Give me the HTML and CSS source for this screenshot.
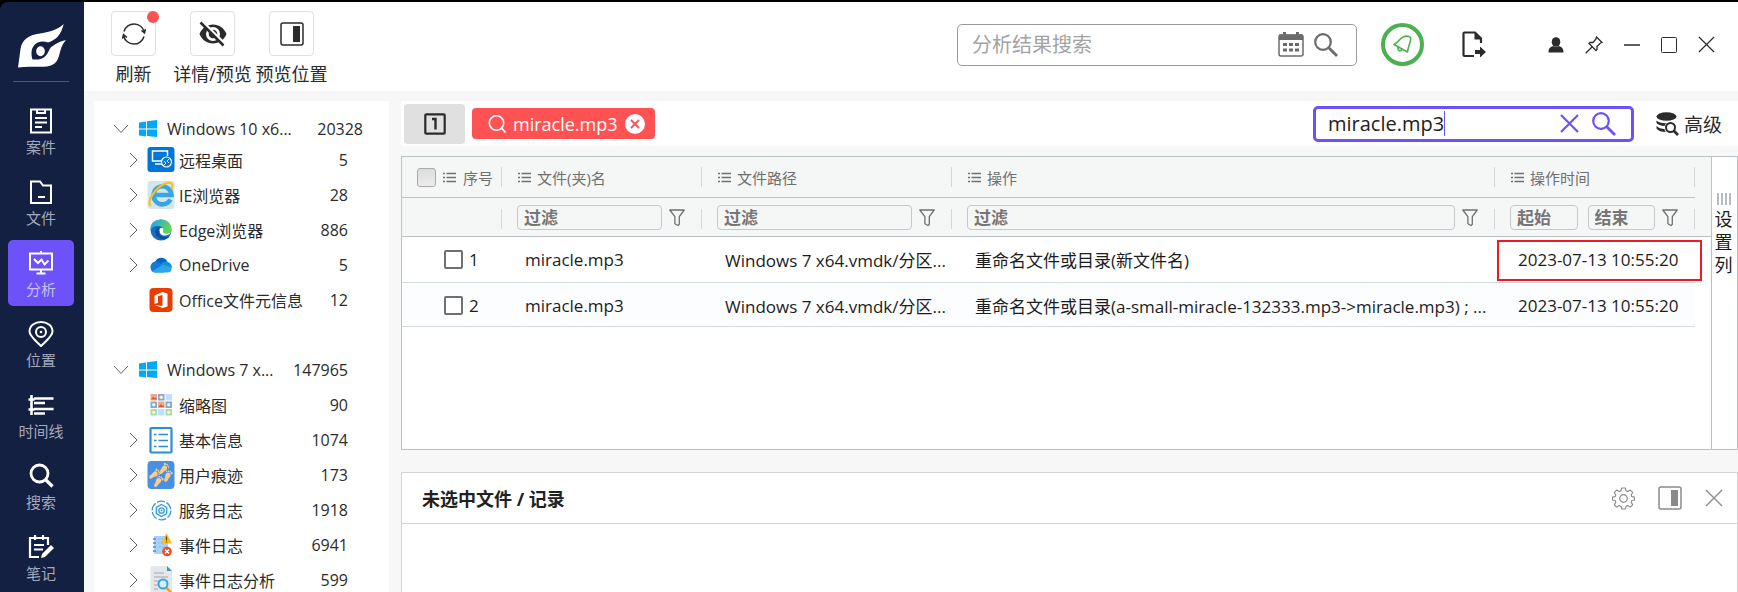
FILE: index.html
```html
<!DOCTYPE html>
<html lang="zh-CN">
<head>
<meta charset="utf-8">
<title>分析</title>
<link rel="stylesheet" href="styles.css">
</head>
<body>
<svg class="defs" aria-hidden="true">
  <symbol id="i-list" viewBox="0 0 13 11"><path d="M0 1.500h2M3.500 1.500H13M0 5.500h2M3.500 5.500H13M0 9.500h2M3.500 9.500H13" stroke="currentColor" stroke-width="1.500"/></symbol>
  <symbol id="i-funnel" viewBox="0 0 16 18"><path d="M.8 1h14.400L10.300 7.600v7.700L9 16.500 5.900 14.800V7.600Z" fill="none" stroke="currentColor" stroke-width="1.300" stroke-linejoin="round"/></symbol>
  <symbol id="i-down" viewBox="0 0 16 10"><path d="M1 1l7 7.500L15 1" fill="none" stroke="currentColor"/></symbol>
  <symbol id="i-right" viewBox="0 0 9 16"><path d="M1 1l7 7-7 7" fill="none" stroke="currentColor"/></symbol>
  <symbol id="i-win" viewBox="0 0 18 18"><path fill="#00a8f8" d="M0 2.500 7 1.500v7H0ZM8 1.300 18 0v8.500H8ZM0 9.500h7v7L0 15.500ZM8 9.500h10V17L8 16Z"/></symbol>
  <symbol id="i-search" viewBox="0 0 24 24"><circle cx="9" cy="9" r="7.800" fill="none" stroke="currentColor" stroke-width="2.200"/><path d="m14.500 14.500 8.500 8.500" stroke="currentColor" stroke-width="2.800"/></symbol>
  <symbol id="i-close" viewBox="0 0 18 18"><path d="m1 1 16 16M17 1 1 17" stroke="currentColor" stroke-width="1.300"/></symbol>
  <symbol id="i-panel" viewBox="0 0 24 24"><rect x="1" y="1" width="22" height="22" rx="2" fill="none" stroke="currentColor" stroke-width="1.500"/><path d="M13 4h7v16h-7z" fill="currentColor"/></symbol>
</svg>
<div class="app">
  <nav class="rail">
    <svg class="logo" viewBox="0 0 48 44" aria-label="Logo"><path fill="#fff" d="M45.700 0C40 6 30 8 22 9.500 10 11 4 16 2.500 25L0 43.500C10 42 20 43.500 29 42.500 38 41 40 36 41.500 30 43 25 44 20 48 16.300 42 17 38 20 34 22.500 31 24.500 31 28 28 31.500 25 35 20 36 14.500 35.500 13 31 13 25 16 21.500 19 17.500 25 16.500 30 18.500 38 16 43 11 45.700 0Z"/><ellipse cx="22.500" cy="27.300" rx="4.300" ry="5" fill="#fff"/></svg>
    <a class="rail-item" href="#case"><svg class="rail-icon" viewBox="0 0 26 26"><g fill="none" stroke="currentColor" stroke-width="2"><path d="M3 1.500h20v23H3z"/><path d="M9 1v4h8V1M7 10h12M7 14.500h12M7 19h7"/></g></svg>案件</a>
    <a class="rail-item" href="#files"><svg class="rail-icon" viewBox="0 0 26 26"><path d="M3 24V2.500h9l3 4h8V24ZM10 18h7" fill="none" stroke="currentColor" stroke-width="2"/></svg>文件</a>
    <a class="rail-item rail-item-active" href="#analysis" aria-current="page"><svg class="rail-icon" viewBox="0 0 26 26"><g fill="none" stroke="currentColor" stroke-width="2"><path d="M2 3.500h22v16H2zM13 1v2M13 19v4M8.500 23.500h9"/><path d="m6 9 4 4 3.500-3.500 3 5 4-4"/></g></svg>分析</a>
    <a class="rail-item" href="#location"><svg class="rail-icon" viewBox="0 0 26 26"><g fill="none" stroke="currentColor" stroke-width="2"><path d="M13 25C7 19 1.500 15 1.500 10.500 1.500 4.500 7 1 13 1s11.500 3.500 11.500 9.500C24.500 15 19 19 13 25Z"/><circle cx="13" cy="11" r="5"/></g><circle cx="13" cy="11" r="1.300" fill="currentColor"/></svg>位置</a>
    <a class="rail-item" href="#timeline"><svg class="rail-icon" viewBox="0 0 26 26"><path d="M3.500 3v20M.5 7.500h6M.5 17.500h6M6 6.500h19.500M6 11h11M6 17h19.500M6 21.500h11" fill="none" stroke="currentColor" stroke-width="2.600"/></svg>时间线</a>
    <a class="rail-item" href="#search"><svg class="rail-icon" viewBox="0 0 26 26"><circle cx="11.500" cy="10.500" r="8.500" fill="none" stroke="currentColor" stroke-width="2.800"/><path d="m17.500 16.500 7 7" stroke="currentColor" stroke-width="3.200"/></svg>搜索</a>
    <a class="rail-item" href="#notes"><svg class="rail-icon" viewBox="0 0 26 26"><g fill="none" stroke="currentColor" stroke-width="2.200"><path d="M20 11V4H2v19h9M7 1v5M15 1v5M6 11h10M6 15.500h9"/></g><path d="m13 24 1-4 9-9 3 3-9 9Z" fill="currentColor"/></svg>笔记</a>
  </nav>

  <header class="topbar">
    <div class="tool-group">
      <button class="tool" type="button"><span class="tool-box"><svg width="24" height="24" viewBox="0 0 24 24"><path d="M2 9.500A10.500 10.500 0 0 1 22.300 10M22 14.500A10.500 10.500 0 0 1 1.700 14M19.500 8.500l3 2.500 1-4M.5 16.500l1-4 3.500 3" fill="none" stroke="currentColor" stroke-width="1.500"/></svg><i class="dot"></i></span>刷新</button>
      <button class="tool" type="button"><span class="tool-box"><svg width="28" height="26" viewBox="0 0 28 26"><path fill="currentColor" fill-rule="evenodd" d="M.5 13C3 7 8 3.500 14 3.500S25 7 27.500 13C25 19 20 22.500 14 22.500S3 19 .5 13Zm6.500 0a7 7 0 1 0 14 0 7 7 0 0 0-14 0Z"/><circle cx="14" cy="13" r="4.300" fill="currentColor"/><path d="M3 0l23 23" stroke="#fff" stroke-width="2.500"/><path d="m1.500 1.500 23 23" stroke="currentColor" stroke-width="2.500"/></svg></span>详情/预览</button>
      <button class="tool" type="button"><span class="tool-box"><svg width="24" height="24"><use href="#i-panel"/></svg></span>预览位置</button>
    </div>
    <div class="top-actions">
      <div class="top-search">
        <input type="text" placeholder="分析结果搜索" aria-label="分析结果搜索">
        <button class="plain" type="button" aria-label="日期"><svg width="26" height="25" viewBox="0 0 26 25"><rect x="1" y="3" width="24" height="21" rx="2" fill="none" stroke="currentColor" stroke-width="1.500"/><path d="M1 2.500h24V8H1zM5 0h3v3H5zM18 0h3v3h-3z" fill="currentColor"/><path d="M5 12.500h16M5 18h16" stroke="currentColor" stroke-width="3" stroke-dasharray="4 2"/></svg></button>
        <button class="plain" type="button" aria-label="搜索"><svg width="24" height="24"><use href="#i-search"/></svg></button>
      </div>
      <button class="plain bell" type="button" aria-label="通知"><svg width="20" height="20" viewBox="0 0 20 20"><path d="M1 9.500C5 8 7 3 10 2q5-2 7.500.5c1 4-2 7-3 14.500L1 9.500Zm4 3c-.5 3 2 4 4 2.300" fill="none" stroke="currentColor" stroke-width="1.600" stroke-linejoin="round"/></svg></button>
      <button class="plain export" type="button" aria-label="导出"><svg width="24" height="27" viewBox="0 0 24 27"><path d="M12 25H2.500Q1.500 25 1.500 24V2.500q0-1 1-1H13l6 6V12" fill="none" stroke="currentColor" stroke-width="2.200"/><path d="M12.500 1v7.500H20ZM13 19h5v-3.500l6 5.500-6 5.500V23h-5Z" fill="currentColor"/></svg></button>
      <div class="win-actions">
        <button class="plain" type="button" aria-label="用户"><svg width="16" height="16" viewBox="0 0 16 16"><ellipse cx="8" cy="5" rx="4.300" ry="4.800" fill="currentColor"/><path d="M.5 15.500c0-4 1.500-5.500 4.500-6.500q3 2 6 0c3 1 4.500 2.500 4.500 6.500Z" fill="currentColor"/></svg></button>
        <button class="plain" type="button" aria-label="置顶"><svg width="18" height="18" viewBox="0 0 18 18"><path d="m11.500 1 5.500 5.500-1.500.5-3.500 3.500v3l-1 1-7-7 1-1h3L11 3ZM7 11 .7 17.300" fill="none" stroke="currentColor" stroke-width="1.300"/></svg></button>
        <button class="plain" type="button" aria-label="最小化"><svg width="16" height="16" viewBox="0 0 16 16"><path d="M0 8h16" stroke="currentColor" stroke-width="1.500"/></svg></button>
        <button class="plain" type="button" aria-label="最大化"><svg width="16" height="16" viewBox="0 0 16 16"><rect x=".5" y=".5" width="15" height="15" rx="1" fill="none" stroke="currentColor"/></svg></button>
        <button class="plain" type="button" aria-label="关闭"><svg width="17" height="17"><use href="#i-close"/></svg></button>
      </div>
    </div>
  </header>

  <aside class="tree">
    <ul class="tree-group tree-group-first">
      <li class="root"><svg class="chev-down"><use href="#i-down"/></svg><svg class="win"><use href="#i-win"/></svg><span class="name">Windows 10 x6...</span><span class="count">20328</span></li>
      <li><svg class="chev"><use href="#i-right"/></svg><svg class="ico" viewBox="0 0 28 28"><rect x=".5" y="1" width="27" height="25" rx="3" fill="#0076d7"/><path d="M15 15H5.500V5h15v5M8 18h7" fill="none" stroke="#fff" stroke-width="1.500"/><circle cx="19.500" cy="16" r="5" fill="none" stroke="#fff" stroke-width="1.200"/><path d="m17 15 2 2-2 2M22 13l-2 2 2 2" fill="none" stroke="#fff"/></svg><span class="name">远程桌面</span><span class="count">5</span></li>
      <li><svg class="chev"><use href="#i-right"/></svg><svg class="ico" viewBox="0 0 28 28"><rect x=".5" width="27" height="28" rx="3" fill="#d3e6ea"/><path d="M23.500 18.500A9 9 0 1 1 24.500 14H8" fill="none" stroke="#39a5e4" stroke-width="4.500"/><path d="M4 25C-1 21 8 7 18 2.500 24 0 27 3 24.500 8" fill="none" stroke="#f5c02c" stroke-width="2.200"/></svg><span class="name">IE浏览器</span><span class="count">28</span></li>
      <li><svg class="chev"><use href="#i-right"/></svg><svg class="ico" viewBox="0 0 28 28"><defs><linearGradient id="eg" x1="0" y1="0" x2="1" y2=".3"><stop offset=".2" stop-color="#2baade"/><stop offset="1" stop-color="#63d64b"/></linearGradient></defs><circle cx="14" cy="14" r="10.500" fill="#146fc4"/><path d="M3.500 14C3 7 8 3.500 14 3.500S24.500 8 24.500 13c0 4-4 5.500-8 4.500-2-1 .5-2 0-4C15.500 9 7 8 3.500 14Z" fill="url(#eg)"/><path d="M12 13c-1.500 4 1 8 6 8 2 0 4-.5 5-1.500-2 5-11 5-14-1C7.500 15 9 12 12 11Z" fill="#0c4f94"/><path d="M12.500 14c0-3 4-2.500 4-.5 0 1.500-1 2 0 3.500 2 1 5 1 7.500-1-1 4-9 5-11 1Z" fill="#fff"/></svg><span class="name">Edge浏览器</span><span class="count">886</span></li>
      <li><svg class="chev"><use href="#i-right"/></svg><svg class="ico" viewBox="0 0 28 28"><path d="M8 11C10 6 18 5 20.500 11l-7 6Z" fill="#0766bd"/><path d="M3.500 17C3 12 8 9 12 11.500L21 18l-4 3.500H8Q4 21 3.500 17Z" fill="#127bd4"/><path d="M13 14c3-4 7-4 8-3 3 1 4 3.500 4 6Z" fill="#1490df"/><path d="M5 20.500 16 13.500l8.500 3q.5 5-4 5H8Q6 21.500 5 20.500Z" fill="#28a8ea"/></svg><span class="name">OneDrive</span><span class="count">5</span></li>
      <li><svg class="chev"></svg><svg class="ico" viewBox="0 0 28 28"><rect x="2.500" y="2" width="23" height="24" rx="4" fill="#eb3c00"/><path d="M7.500 18V9.500L15.500 6l5 1.500v13l-5 1.500-8-3 8 1V9l-4.500 1.300v6.500Z" fill="#fff"/></svg><span class="name">Office文件元信息</span><span class="count">12</span></li>
    </ul>
    <ul class="tree-group">
      <li class="root"><svg class="chev-down"><use href="#i-down"/></svg><svg class="win"><use href="#i-win"/></svg><span class="name">Windows 7 x...</span><span class="count">147965</span></li>
      <li><svg class="chev"></svg><svg class="ico" viewBox="0 0 28 28"><g><path d="M3.500 3h6.500v6.500H3.500zM11 10.500h6.500V17H11z" fill="#f0aa83"/><path d="M11 3h6.500v6.500H11zM3.500 10.500H10V17H3.500zM18.500 10.500H25V17h-6.500z" fill="#7fa9dc"/><path d="M18.500 3H25v6.500h-6.500zM11 18h6.500v6.500H11z" fill="#bfe0fa"/><path d="M3.500 18H10v6.500H3.500zM18.500 18H25v6.500h-6.500z" fill="#a8d9b4"/><path d="m4 8.500 2.500-3 1.500 2 1-1 1 2ZM11.500 16l2.500-3 1.500 2 1-1 1 2Z" fill="#c9603e"/></g><g fill="#fff2b3"><circle cx="14.300" cy="6.200" r="1.700"/><circle cx="6.700" cy="13.700" r="1.700"/><circle cx="21.700" cy="13.700" r="1.700"/><circle cx="6.700" cy="21.200" r="1.700"/><circle cx="21.700" cy="21.200" r="1.700"/></g></svg><span class="name">缩略图</span><span class="count">90</span></li>
      <li><svg class="chev"><use href="#i-right"/></svg><svg class="ico" viewBox="0 0 28 28"><rect x="3.500" y="2" width="21" height="24.500" rx="1" fill="#fff" stroke="#2b8cda" stroke-width="2.200"/><path d="M7 8.500h2.500M11.500 8.500H21M7 14.500h2.500M11.500 14.500H21M7 20.500h2.500M11.500 20.500H21" stroke="#2b8cda" stroke-width="1.500"/></svg><span class="name">基本信息</span><span class="count">1074</span></li>
      <li><svg class="chev"><use href="#i-right"/></svg><svg class="ico" viewBox="0 0 28 28"><defs><g id="foot"><path d="M-2.500-2C-2-4.500 2.300-4.300 2.700-1.500 3 .5 1.500 1 1.300 3c0 2.500-.8 3.500-2 3.500S-2.700 5-2.300 3C-2 1-3 0-2.500-2Z"/><circle cx="-2.300" cy="-4.800" r="1.200"/><circle cx="-.1" cy="-5.500" r=".9"/><circle cx="1.700" cy="-5" r=".8"/><circle cx="3.100" cy="-3.800" r=".7"/></g></defs><rect x=".5" width="27" height="28" rx="4" fill="#4a90e2"/><g fill="#fbcb8b"><use href="#foot" transform="translate(17 8) rotate(35) scale(.95)"/><use href="#foot" transform="translate(7.500 13.500) rotate(48) scale(.95)"/><use href="#foot" transform="translate(20.500 15) rotate(30) scale(-.95 .95)"/><use href="#foot" transform="translate(11 20.500) rotate(38) scale(-.95 .95)"/></g></svg><span class="name">用户痕迹</span><span class="count">173</span></li>
      <li><svg class="chev"><use href="#i-right"/></svg><svg class="ico" viewBox="0 0 28 28"><g fill="none" stroke="#2f9ade" stroke-width="1.300"><circle cx="14.500" cy="14.500" r="9.300" stroke-dasharray="8 1.740"/><path d="m14.500 8.500 5.200 3v6l-5.200 3-5.200-3v-6Z"/><circle cx="14.500" cy="14.500" r="2.700"/></g><circle cx="14.500" cy="14.500" r=".9" fill="#2f9ade"/></svg><span class="name">服务日志</span><span class="count">1918</span></li>
      <li><svg class="chev"><use href="#i-right"/></svg><svg class="ico" viewBox="0 0 28 28"><path d="M7 5h14v18H7z" fill="#a9d0f7"/><path d="M6 8h3M6 12h3M6 16h3M6 20h3" stroke="#4d8fd5" stroke-width="1.500"/><path d="M11 8h9M11 12h9M11 16h9" stroke="#8fc0f0"/><path d="m19.500 2 5.500 10.500H14Z" fill="#fdbe14"/><path d="M19.500 5.500v4M19.500 10.500v1" stroke="#4b3a10" stroke-width="1.200"/><circle cx="20" cy="20.500" r="4.800" fill="#f04c22"/><path d="m18 18.500 4 4M22 18.500l-4 4" stroke="#fff" stroke-width="1.500"/></svg><span class="name">事件日志</span><span class="count">6941</span></li>
      <li><svg class="chev"><use href="#i-right"/></svg><svg class="ico" viewBox="0 0 28 28"><path d="M3.500 0H20l5 5v23H3.500Z" fill="#e4e7ea"/><path d="M20 0v5h5Z" fill="#3b97c6"/><path d="M7 7h10M7 11h14M7 15h14M7 19h4M7 23h4" stroke="#a3a9ae" stroke-width="1.200"/><circle cx="16" cy="18" r="4.500" fill="#d7f0fc" stroke="#3ba3dd" stroke-width="2"/><path d="m19.500 22 5 5" stroke="#f59e23" stroke-width="2.500"/></svg><span class="name">事件日志分析</span><span class="count">599</span></li>
    </ul>
  </aside>

  <main class="main">
    <div class="filterbar">
      <button class="page-btn" type="button" aria-label="第一页"><svg width="22" height="22" viewBox="0 0 22 22"><rect x="1.300" y="1.300" width="19.400" height="19.400" rx="1" fill="none" stroke="currentColor" stroke-width="2.200"/><path d="M8 6h3.500v10.500" fill="none" stroke="currentColor" stroke-width="2.400"/></svg></button>
      <span class="tag"><svg width="18" height="18" viewBox="0 0 18 18"><circle cx="8.500" cy="8" r="7.200" fill="none" stroke="currentColor" stroke-width="1.600"/><path d="m13.500 13 4 4.500" stroke="currentColor" stroke-width="1.600"/></svg>miracle.mp3<button class="plain" type="button" aria-label="移除"><svg width="20" height="20" viewBox="0 0 20 20"><circle cx="10" cy="10" r="10" fill="#fff"/><path d="m6 6 8 8M14 6l-8 8" stroke="#ff5252" stroke-width="1.800"/></svg></button></span>
      <div class="query">
        <input type="text" value="miracle.mp3" aria-label="搜索"><i class="caret"></i>
        <button class="plain clear" type="button" aria-label="清除"><svg width="19" height="19" viewBox="0 0 19 19"><path d="m1 1 17 17M18 1 1 18" stroke="currentColor" stroke-width="2.200"/></svg></button>
        <button class="plain" type="button" aria-label="搜索"><svg width="24" height="24"><use href="#i-search"/></svg></button>
      </div>
      <button class="plain advanced" type="button"><svg width="23" height="24" viewBox="0 0 23 24"><g fill="currentColor"><ellipse cx="10.500" cy="4.500" rx="10" ry="4.300"/><path d="M.5 8.500C3 11 8 11.500 11 11q-2 1-2.500 3Q3 13.500.5 11ZM.5 14q3 3 8 3 0 2 1.500 3-7 0-9.500-3.500Z"/></g><circle cx="14.500" cy="15.500" r="4.500" fill="#fff" stroke="currentColor" stroke-width="2"/><path d="m17.500 18.500 4.500 4.500" stroke="currentColor" stroke-width="2.600"/></svg>高级</button>
    </div>

    <section class="results">
      <div class="grid">
        <table>
          <colgroup><col class="c-index"><col class="c-name"><col class="c-path"><col><col class="c-time"><col class="c-gutter"></colgroup>
          <thead>
            <tr class="titles">
              <th><div class="title title-first"><input class="check check-all" type="checkbox" aria-label="全选"><svg><use href="#i-list"/></svg>序号</div></th>
              <th><div class="title"><svg><use href="#i-list"/></svg>文件(夹)名</div></th>
              <th><div class="title"><svg><use href="#i-list"/></svg>文件路径</div></th>
              <th><div class="title"><svg><use href="#i-list"/></svg>操作</div></th>
              <th><div class="title"><svg><use href="#i-list"/></svg>操作时间</div></th>
              <td class="gutter"></td>
            </tr>
            <tr class="filters">
              <td><div class="filter"></div></td>
              <td><div class="filter"><input type="text" placeholder="过滤" aria-label="文件名过滤"><button class="plain" type="button" aria-label="筛选"><svg><use href="#i-funnel"/></svg></button></div></td>
              <td><div class="filter"><input type="text" placeholder="过滤" aria-label="路径过滤"><button class="plain" type="button" aria-label="筛选"><svg><use href="#i-funnel"/></svg></button></div></td>
              <td><div class="filter"><input type="text" placeholder="过滤" aria-label="操作过滤"><button class="plain" type="button" aria-label="筛选"><svg><use href="#i-funnel"/></svg></button></div></td>
              <td><div class="filter"><input class="from" type="text" placeholder="起始" aria-label="起始时间"><input type="text" placeholder="结束" aria-label="结束时间"><button class="plain" type="button" aria-label="筛选"><svg><use href="#i-funnel"/></svg></button></div></td>
              <td class="gutter"></td>
            </tr>
          </thead>
          <tbody>
            <tr><td><label class="pick"><input class="check" type="checkbox">1</label></td><td>miracle.mp3</td><td>Windows 7 x64.vmdk/分区...</td><td>重命名文件或目录(新文件名)</td><td class="marked">2023-07-13 10:55:20<i class="marker"></i></td><td class="gutter"></td></tr>
            <tr><td><label class="pick"><input class="check" type="checkbox">2</label></td><td>miracle.mp3</td><td>Windows 7 x64.vmdk/分区...</td><td>重命名文件或目录(a-small-miracle-132333.mp3-&gt;miracle.mp3) ; ...</td><td>2023-07-13 10:55:20</td><td class="gutter"></td></tr>
          </tbody>
        </table>
      </div>
      <button class="columns-btn" type="button"><svg width="14" height="12" viewBox="0 0 14 12"><path d="M1 0v12M5 0v12M9 0v12M13 0v12" stroke="#8d989e" stroke-width="1.300"/></svg><span>设置列</span></button>
    </section>

    <section class="detail">
      <header class="detail-head">
        <h2>未选中文件 / 记录</h2>
        <button class="plain" type="button" aria-label="设置"><svg width="23" height="23" viewBox="-12 -12 24 24"><g fill="none" stroke="currentColor" stroke-width="1.200"><circle r="4"/><path stroke-linejoin="round" d="M-1.800-11h3.600l.8 3 1.800.8 2.700-1.600 2.500 2.500L8-3.600l.7 1.600 2.800.5v3l-2.800.6L8 3.800l1.600 2.700-2.500 2.500-2.700-1.600-1.800.8-.8 2.800h-3.600l-.8-2.800-1.800-.8-2.700 1.600-2.500-2.500L-8 3.800l-.7-1.700-2.800-.6v-3l2.800-.5.7-1.600-1.600-2.700 2.500-2.500 2.700 1.600 1.800-.8Z"/></g></svg></button>
        <button class="plain" type="button" aria-label="预览位置"><svg width="24" height="24"><use href="#i-panel"/></svg></button>
        <button class="plain" type="button" aria-label="关闭"><svg width="18" height="18"><use href="#i-close"/></svg></button>
      </header>
    </section>
  </main>
</div>
</body>
</html>
```

FILE: styles.css
```css
* { box-sizing: border-box; }

body {
  margin: 0;
  background: #000;
  color: #2b2b2b;
  font-family: "Open Sans", "Noto Sans CJK SC", sans-serif;
  font-size: 16px;
}

button, input { font: inherit; color: inherit; }
svg { display: block; flex: none; }
.defs { position: absolute; width: 0; height: 0; }

.app {
  display: grid;
  grid-template-columns: 84px 295px minmax(0, 1fr);
  grid-template-rows: 89px minmax(0, 1fr);
  height: 100vh;
  border-top: 2px solid #000;
  background: linear-gradient(#000, #000) 0 0 / 84px 10px no-repeat #f7f7f7;
  overflow: hidden;
}

.plain {
  display: flex;
  align-items: center;
  padding: 0;
  border: 0;
  background: none;
  cursor: pointer;
}

/* Navigation rail */
.rail {
  grid-row: 1 / 3;
  display: flex;
  flex-direction: column;
  align-items: center;
  gap: 5px;
  padding-right: 2px;
  background: #132042;
  border-top-left-radius: 8px;
}
.logo {
  width: 48px;
  height: 44px;
  margin: 22px 0 0 2px;
}
.logo + .rail-item { position: relative; margin-top: 25px; }
.logo + .rail-item::before {
  content: "";
  position: absolute;
  top: -17px;
  left: 5px;
  right: 5px;
  border-top: 1px solid #46558a;
}
.rail-item {
  display: flex;
  flex: none;
  flex-direction: column;
  align-items: center;
  gap: 3px;
  width: 66px;
  height: 66px;
  padding-top: 10px;
  border-radius: 5px;
  color: #a3aabc;
  font-size: 15px;
  line-height: 20px;
  text-decoration: none;
}
.rail-icon { width: 26px; height: 26px; color: #fff; }
.rail-item-active { background: #6c52f8; color: #c9bffc; }

/* Top bar */
.topbar {
  grid-column: 2 / 4;
  display: flex;
  justify-content: space-between;
  padding: 9px 23px 0 10px;
  background: #fff;
}
.tool-group { display: flex; }
.tool {
  display: flex;
  flex-direction: column;
  align-items: center;
  gap: 5px;
  width: 79px;
  padding: 0;
  border: 0;
  background: none;
  font-size: 18px;
  line-height: 26px;
  white-space: nowrap;
}
.tool-box {
  position: relative;
  display: flex;
  align-items: center;
  justify-content: center;
  width: 45px;
  height: 45px;
  border: 1px solid #e0e0e0;
  border-radius: 4px;
}
.dot {
  position: absolute;
  top: -1px;
  right: -4px;
  width: 12px;
  height: 12px;
  border-radius: 50%;
  background: #ff5252;
}
.top-actions {
  display: flex;
  align-items: center;
  height: 43px;
  margin-top: 12px;
}
.top-search {
  display: flex;
  align-items: center;
  gap: 10px;
  width: 400px;
  height: 42px;
  padding: 0 18px 0 14px;
  border: 1px solid #9b9b9b;
  border-radius: 5px;
  color: #6b6b6b;
}
.top-search input {
  flex: 1;
  min-width: 0;
  padding: 0;
  border: 0;
  outline: 0;
  background: none;
  font-size: 20px;
}
.top-search input::placeholder { color: #a3a3a3; }
.bell {
  justify-content: center;
  width: 43px;
  height: 43px;
  margin-left: 24px;
  border: 4px solid #4caf50;
  border-radius: 50%;
  color: #4caf50;
}
.export { margin-left: 38px; }
.win-actions {
  display: flex;
  gap: 21px;
  margin-left: 62px;
}

/* Source tree */
.tree {
  margin: 10px 0 0 10px;
  width: 295px;
  padding-top: 15px;
  background: #fff;
  overflow: hidden;
}
.tree-group { margin: 0; padding: 0; list-style: none; }
.tree-group + .tree-group { margin-top: 35px; }
.tree li {
  display: flex;
  align-items: center;
  height: 35px;
  padding: 0 41px 0 35px;
  white-space: nowrap;
}
.tree .root { padding-left: 19px; }
.tree-group-first .root { height: 26px; padding-right: 26px; }
.chev-down { width: 16px; height: 10px; margin-right: 10px; color: #616161; }
.win { width: 18px; height: 18px; margin-right: 10px; }
.chev { width: 9px; height: 16px; margin-right: 9px; color: #616161; }
.ico { width: 28px; height: 28px; margin-right: 4px; }
.name { flex: 1; }

/* Main column */
.main {
  display: flex;
  flex-direction: column;
  min-width: 0;
  margin: 10px 0 0 22px;
}
.filterbar {
  display: flex;
  flex: none;
  align-items: center;
  height: 45px;
  padding: 0 16px 0 3px;
  background: #fff;
}
.page-btn {
  display: flex;
  align-items: center;
  justify-content: center;
  width: 61px;
  height: 40px;
  padding: 0;
  border: 0;
  border-radius: 4px;
  background: #e0e0e0;
}
.tag {
  display: flex;
  align-items: center;
  gap: 7px;
  height: 31px;
  margin-left: 7px;
  padding: 0 10px 0 16px;
  border-radius: 4px;
  background: #ff5252;
  color: #fff;
  font-size: 18px;
}
.query {
  display: flex;
  align-items: center;
  width: 321px;
  height: 36px;
  margin-left: auto;
  padding: 0 15px 0 12px;
  border: 3px solid #6c52f8;
  border-radius: 5px;
  color: #6c52f8;
}
.query input {
  field-sizing: content;
  padding: 0;
  border: 0;
  outline: 0;
  background: none;
  color: #212121;
  font-size: 20px;
}
.caret { width: 1px; height: 25px; background: #6c52f8; }
.clear { margin: 0 13px 0 auto; }
.advanced {
  gap: 5px;
  margin-left: 22px;
  font-size: 19px;
}

/* Results table */
.results {
  display: flex;
  flex: none;
  height: 294px;
  margin-top: 10px;
  border: 1px solid #bcc1c6;
  background: #fff;
}
.grid { flex: 1; min-width: 0; }
.grid table {
  width: 100%;
  table-layout: fixed;
  border-collapse: separate;
  border-spacing: 0;
  color: #1c1c1c;
  font-size: 17px;
}
.c-index { width: 100px; }
.c-name, .c-time { width: 200px; }
.c-path { width: 250px; }
.c-gutter { width: 16px; }
thead th, thead td {
  padding: 0;
  border-bottom: 1px solid #bcc1c6;
  background: #f5f7f7;
}
.titles .gutter { border-bottom-color: #f5f7f7; }
.title, .filter {
  display: flex;
  align-items: center;
  color: #6f6f6f;
}
.title {
  gap: 6px;
  height: 20px;
  margin: 10px 0;
  padding-left: 16px;
  border-right: 1px solid #d5d8da;
  font-size: 15px;
  font-weight: 400;
}
.title svg { width: 13px; height: 11px; }
.title-first { gap: 7px; padding-left: 15px; }
.filter {
  gap: 7px;
  height: 38px;
  padding: 1px 17px 0 15px;
  background: linear-gradient(#d5d8da, #d5d8da) right 11px / 1px 20px no-repeat;
}
.filter input {
  flex: 1;
  width: 0;
  min-width: 0;
  height: 25px;
  padding: 0 6px;
  border: 1px solid #c4c8ca;
  border-radius: 4px;
  outline: 0;
  background: none;
}
.filter input::placeholder { color: #757575; font-weight: 700; }
.filter .from { margin-right: 3px; }
.filter svg { width: 16px; height: 18px; }
tbody td {
  height: 46px;
  padding: 0 0 0 23px;
  border-bottom: 1px solid #d7dbdf;
  white-space: nowrap;
}
tbody tr:nth-child(2) td { height: 44px; padding-top: 2px; }
tbody tr:nth-child(even) td { background: #fcfdff; }
tbody tr td.gutter { padding: 0; border: 0; background: #fff; }
.pick {
  display: flex;
  align-items: center;
  gap: 6px;
  padding-left: 19px;
}
.check {
  appearance: none;
  flex: none;
  width: 19px;
  height: 19px;
  margin: 0;
  border: 2px solid #707070;
  border-radius: 2px;
  background: #fff;
}
.check-all {
  border: 1px solid #a9a9a9;
  border-radius: 3px;
  background: linear-gradient(#dcdcdc, #ececec);
}
.marked { position: relative; }
.marker {
  position: absolute;
  inset: 3px -7px 1px 2px;
  border: 2px solid #ed1c24;
  pointer-events: none;
}
.columns-btn {
  display: flex;
  flex-direction: column;
  align-items: center;
  gap: 3px;
  width: 26px;
  padding: 36px 2px 0 0;
  border: 0;
  border-left: 1px solid #bcc1c6;
  background: none;
  color: #1c1c1c;
  font-size: 18px;
  line-height: 23px;
}
.columns-btn span { width: 18px; }

/* Detail panel */
.detail {
  flex: 1;
  margin-top: 22px;
  border: 1px solid #d3d3d3;
  border-bottom: 0;
  background: #fff;
}
.detail-head {
  display: flex;
  align-items: center;
  gap: 23px;
  height: 51px;
  padding: 0 14px 0 20px;
  border-bottom: 1px solid #d3d3d3;
  color: #8a8a8a;
}
.detail-head h2 {
  flex: 1;
  margin: 0;
  color: #212121;
  font-size: 18px;
  font-weight: 700;
}
```
